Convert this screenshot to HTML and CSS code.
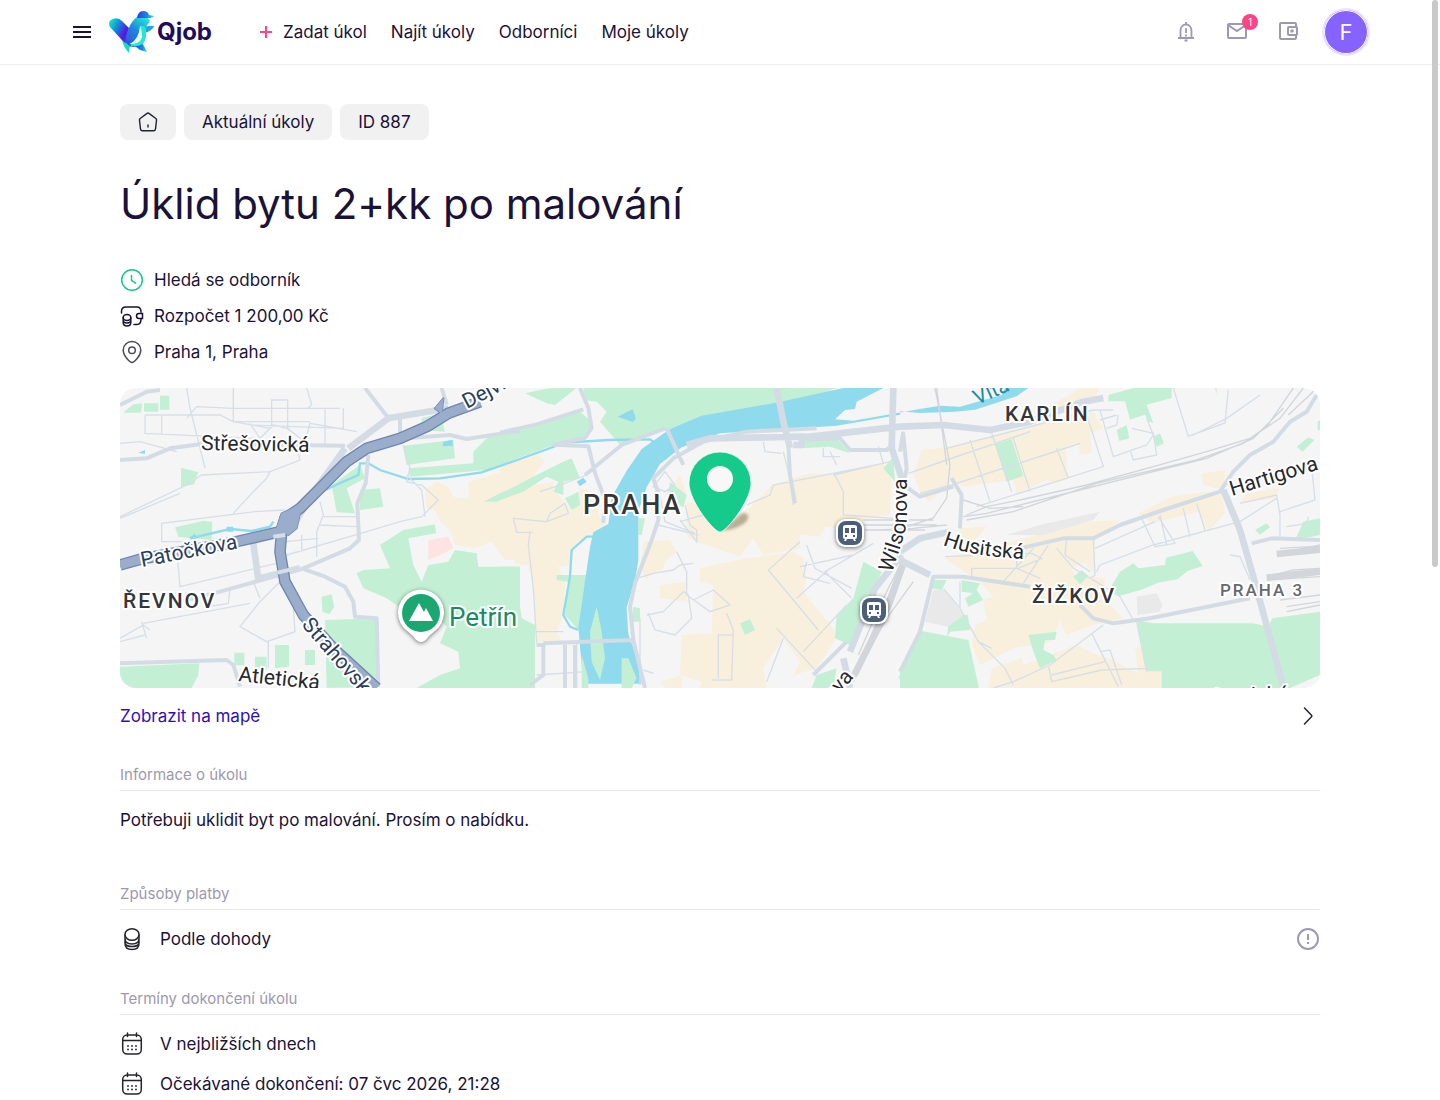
FILE: index.html
```html
<!DOCTYPE html>
<html lang="cs">
  <head>
    <meta charset="utf-8">
    <meta name="viewport" content="width=device-width, initial-scale=1">
    <title>Úklid bytu 2+kk po malování</title>
    <link rel="stylesheet" href="styles.css">
  </head>
  <body>
    <header class="header">
      <button class="menu" type="button" aria-label="Menu">
        <svg width="18" height="12" viewBox="0 0 18 12"><path d="M0 1h18M0 6h18M0 11h18" stroke="#1b1238" stroke-width="2"/></svg>
      </button>
      <a class="logo" href="#">
        <svg width="46" height="42" viewBox="0 0 46 42">
          <defs>
            <linearGradient id="wing" x1="0" y1="0.2" x2="1" y2="0.8"><stop offset="0" stop-color="#16e3c5"/><stop offset="0.35" stop-color="#1484dc"/><stop offset="0.7" stop-color="#5a14dc"/><stop offset="1" stop-color="#2a62dd"/></linearGradient>
            <linearGradient id="bird" x1="0.2" y1="1" x2="0.8" y2="0"><stop offset="0" stop-color="#3450e0"/><stop offset="0.5" stop-color="#1f86e0"/><stop offset="1" stop-color="#1eead0"/></linearGradient>
            <linearGradient id="cap" x1="0" y1="0" x2="1" y2="0"><stop offset="0" stop-color="#2b40d8"/><stop offset="0.6" stop-color="#1d86e0"/><stop offset="1" stop-color="#2af0d8"/></linearGradient>
          </defs>
          <path d="M13 28 Q14 36 20 42 L20 37 L24 34z" fill="#19dcc4"/>
          <path d="M26 35 L33 32 Q36 36 38 41 L31 39z" fill="url(#cap)"/>
          <path d="M34 18 Q37 14 45 15 Q44 19 36 22z" fill="#1da6e2"/>
          <path d="M1 16 Q-2 10 4 8 Q9 6 13 10 L22 19 L20 33 Q15 32 12 28z" fill="url(#wing)"/>
          <path d="M19 19 Q23 9 28 6 L38 7 Q43 9 39 13 Q36 16 37 23 Q36 36 24 36 Q13 34 19 19z" fill="url(#bird)"/>
          <path d="M31 15 Q38 13 37 24 Q36 37 22 35 L21 32 Q32 32 31 15z" fill="#27e6d4"/>
          <path d="M31 15 Q38 33 21 33 Q30 28 31 15z" fill="#e2fff9"/>
          <path d="M28 7 Q29 0 34 0 Q39 0 40 4 L45 5 Q44 7 39 7z" fill="url(#cap)"/>
        </svg>
        <span>Qjob</span>
      </a>
      <nav class="nav">
        <a class="nav-new" href="#">
          <svg width="12" height="12" viewBox="0 0 12 12"><path d="M6 0v12M0 6h12" stroke="#fb4585" stroke-width="2"/></svg>
          Zadat úkol
        </a>
        <a href="#">Najít úkoly</a>
        <a href="#">Odborníci</a>
        <a href="#">Moje úkoly</a>
      </nav>
      <div class="tools">
        <button type="button" aria-label="Oznámení">
          <svg width="24" height="24" viewBox="0 0 24 24" fill="none" stroke="#9d99b0" stroke-width="1.8"><path d="M4 18h16M6.500 18v-7.500a5.500 6 0 0 1 11 0V18M12 4.500V2M10.500 20.500h3M12 8v5M12 14.500v2"/></svg>
        </button>
        <button type="button" aria-label="Zprávy">
          <svg width="24" height="24" viewBox="0 0 24 24" fill="none" stroke="#9d99b0" stroke-width="2"><rect x="3" y="4" width="18" height="14" rx="1"/><path d="M3 5l9 6 9-6"/></svg>
          <span class="badge">1</span>
        </button>
        <button type="button" aria-label="Peněženka">
          <svg width="24" height="24" viewBox="0 0 24 24" fill="none" stroke="#9d99b0" stroke-width="2"><path d="M20 7V4a1 1 0 0 0-1-1H5a1 1 0 0 0-1 1v14a1 1 0 0 0 1 1h14a1 1 0 0 0 1-1v-3"/><rect x="12" y="7" width="9" height="8" rx="1"/><circle cx="16" cy="11" r="0.800"/></svg>
        </button>
        <button class="avatar" type="button" aria-label="Profil">F</button>
      </div>
    </header>

    <main class="page">
      <nav class="crumbs">
        <a href="#" aria-label="Domů">
          <svg width="20" height="20" viewBox="0 0 20 20" fill="none" stroke="#1f2430" stroke-width="1.400" stroke-linecap="round" stroke-linejoin="round"><path d="M8.700 1.600a2 2 0 0 1 2.600 0l6.500 4.900a1.800 1.800 0 0 1 .7 1.800l-1 8.500a2 2 0 0 1-2 1.900H4.500a2 2 0 0 1-2-1.900L1.500 8.300a1.800 1.800 0 0 1 .7-1.800zM10 13v2"/></svg>
        </a>
        <a href="#">Aktuální úkoly</a>
        <a href="#">ID 887</a>
      </nav>

      <h1>Úklid bytu 2+kk po malování</h1>

      <ul class="meta">
        <li>
          <svg width="24" height="24" viewBox="0 0 24 24" fill="none" stroke="#15ca8a" stroke-width="1.500" stroke-linecap="round" stroke-linejoin="round"><circle cx="12" cy="12" r="10.300"/><path d="M11.500 7.500v4.800l4 2.800"/></svg>
          Hledá se odborník
        </li>
        <li>
          <svg width="24" height="24" viewBox="0 0 24 24" fill="none" stroke="#1b1238" stroke-width="1.500" stroke-linecap="round"><path d="M1.500 9V7.500Q1.500 3 6 3h11q4 0 4 5M21 15q0 5.500-4 5.500h-3M22.500 9.500v5h-3.500a2.500 2.500 0 0 1 0-5z"/><ellipse cx="7" cy="13.500" rx="3.800" ry="3"/><path d="M3.200 13.500v5q0 3.500 3.800 3.500t3.800-3.500v-5M3.200 16q0 3 3.800 3t3.800-3"/></svg>
          Rozpočet 1 200,00 Kč
        </li>
        <li>
          <svg width="24" height="24" viewBox="0 0 24 24" fill="none" stroke="#4c4c55" stroke-width="1.500"><path d="M12 22.500c-1.500 0-8.800-6-8.800-12.500a8.800 8.500 0 0 1 17.600 0c0 6.500-7.300 12.500-8.800 12.500z"/><circle cx="12" cy="10.300" r="3.300"/></svg>
          Praha 1, Praha
        </li>
      </ul>

      <svg class="map" viewBox="0 0 1200 300" preserveAspectRatio="xMidYMid slice" role="img" aria-label="Mapa">
        <rect width="1200" height="300" fill="#f5f5f5"/>
        <!-- terrain and streets -->
        <svg width="1200" height="300" viewBox="0 9 3600 900">
          <g class="urban">
            <path d="M915 315l35-25 35 15 15 30 45 5v-50l150-45h50v280h-90l-40-55-50 20-60-10-15-45-30-25-15-35-25-5z"/>
            <g transform="translate(1140)">
              <path d="M0 245l110-35 25 15-25 35-60 40-50 20zM0 360l100-60 60-10v20l55 70 25-70 40 10 20 80 20 30-90 40-20 70-35 5 20 45-5 100-20 50 15 30h-75l-10-170-15-60-40-5-5-55-40-30zM83 800h20v70H85z"/>
              <path d="M560 350l165 40 90-90 115-35 70 5 150-35 25 45-5 110-60 10-100 30-35-5-15 30-60-5v40l-110 20-30-50-40 55-130-45-30-15zM600 550l140-30 140-20 30 20 10 60-10 40 90 110 10 30-60 90-70 20 20-40-50-70-60 90 10 59H600l5-19-65-20 5-120 90-5 5-145-40-10z"/>
              <path d="M430 470l80-5 20 35-35 30-5 20-50 30-20-30zM480 600l80-10v60l-80-10zM500 330l40-60 20 60-10 40zM485 890l60-20v39h-50z"/>
            </g>
            <g transform="translate(2340)">
              <path d="M140 185l440-105 30 50-40 15 5 60-35 5-5-35-40 10 10 95-35 15-30-10-90 40-10-40-150 20-30-20-70 65-25-20-25-60 25-75zM420 80l120-70h60l-20 40-80 30zM60 215l60-15v35l-60 5zM905 265l70-10-5 60-60-15zM715 385l100-50 100-15 50 10 10 55-50 55-30-60-140 35zM1020 355l20-30 100-15-15 30zM130 520l320-80 120-30 90-5-75 60-5 100-25-30-40 15 10 20 90 10-5 60 60 60-90 20-80 30-20-40-30 60-110 20-100 50-25-60 10-60 35-15-10-60 30-10-40-45zM180 430l80-5-30 35-50 20zM275 850l90-30 5 20 160-60 50 25 60 20 55 30 20 10-10-75 40-10 15 75 35 5v49H265z"/>
            </g>
          </g>
          <g class="park">
            <path d="M10 83l30-25 27-3-4 28zM72 55h43v25H72zM120 32h28v42h-28zM183 248l52 14-13 36-39 8zM165 427l85-19 27 2-2 55-100-10zM848 183l152-18 5 55-145 20zM1060 200l50-50 90-10v75l-100 40-230 20-5-25 195-15zM905 100l55-15 50 10-45 10 10 35-70-5zM635 300l85-60 15 40-55 30 25 75-55-3zM720 315l60-5 10 55-70 10zM780 480l70-45 95-17 3 27-83 15 15 80 25 50 20-50 60-10 20-35 65 10 5 40h125v364H890l70-39 60-20-5-50-55-25 20-50-30-30-100-20-50-35-70-30-20-45 20-10 80-5zM605 635l30-7 8 37-15 23-21-8zM615 705l155-5 7 205-157 4zM343 803h30v38h-30zM465 780h42v65l-42 5zM405 815h35v40h-35zM555 795h30v45h-30zM0 845l238-10-3 35-20 39H0zM1090 350l60-30 50-20v20l-70 30z"/>
            <g transform="translate(1140)">
              <path d="M250 9h760l-70 26-180 35-160 30-100 35-140 45-60-70 20-30-30-30-35-5zM75 25l75-16h80l-65 51-25-5zM0 150l240-70 35 30-10 40-105 30-160 60zM0 545h60l-10 45 15 110 40 20v189H0zM120 265l60-30 35-15 25 60-50 10v40l-30-10 15-30-35-15-70 45-70 25 5-20zM170 570h90l-10 50-15 115-40-45 10-100-35-5zM195 340l40-20 5 40-25 15zM720 715l30-12 15 32-30 15zM900 165l110-5 40 45-60-20-90 5zM1090 530l55 30-95 220-45-20 5-70 50-50zM1235 790l25-30v149l-65-29zM1150 250l30-35 5 75zM950 870l60-20-10 59h-65zM510 290l50 40-10 35-50-15zM415 400h20l-10 50h-10zM400 665l20 5v40h-25z"/>
            </g>
            <g transform="translate(2340)">
              <path d="M285 178l50-15 35 110-50 17zM625 30l75-21h115v30l-75 20 20 55-15-5-10-20-45 15-15-55-50 0zM650 135l30-15 8 40-30 8zM760 155l20-10 12 30-22 10zM1190 185l35-28 18 8-35 35zM1065 435l35-20 10 12-30 22zM1210 410l50-10v50l-75 15zM1253 110l7-5v30h-7zM945 9h5v18zM630 610l30-50 40-25 15 15 80-10 3-22 80-20 30 45-45 15-30 25-60 10-45 20-70 20zM520 575l25-20 20 18-25 25zM95 585h45l-15 30-30-5zM185 585l55 10-10 20 20 30-45 20-10-25 25-15-35-5zM148 690h55l8 45-60 5-10 15zM65 738l140 27 32 144H0v-60zM385 750l85-10-5 25-30 0-5 30 30 15 10 15-50 25-20-50zM710 705l50 10 300 0 45 10 12-25 143-20v190l-90 39H785v-50h-45z"/>
            </g>
          </g>
          <path d="M925 465l60-10 15 35-40 20-35 15z" fill="#fde3e1"/>
          <path d="M2440 615l35 0 55 75-45 35-70-15zM3050 635l60-10 18 35-10 20-65 10zM2660 450l100-30 180-40-20 25-150 45z" fill="#e9e9e9"/>
          <g class="water">
            <path d="M2170 9h120l-80 41-5 22-30 3-30 28 55 4 200-35 60-10 60 3 125-35 10-21h70l-35 25-125 40-60 6-105 4-60-5 0 10-190 33-150 10-200 13-115 42-65 50-40 70-25 70v150l-10 60-25 80 5 80 25 70 15 79h-175l-15-169 20-140 15-100 10-45 45-25 10-80 45-80 45-65 85-60 95-40 230-40z"/>
            <path d="M1493 95l45-22 10 28-10 10zM1370 290l20-12 10 12-20 14zM970 170l28-6v18l-30 2zM55 203l20-8v12zM320 425h20v15h-20zM205 460l20-14 5 16z"/>
            <path class="stream" d="M210 460l120-28 65 6 55-13 10-15M610 318l60-28 45-20 5-35h25l35 20 85 27 95-2 125-18 115-40 135-49 130-8 125-2 40 27M1430 455l-30 0-45 40-5 80-20 115 20 35 25 10"/>
          </g>
          <path class="park-fill" d="M1430 665l15 75 10 80-15 65-25-55-5-90zM1505 820h20l25 60-15 29h-30zM1385 810l20 70v29h-20z"/>
          <g class="street">
            <path d="M75 90h225l40 20 110 20M75 90v55l330 15M125 90v60M0 175l60-5 110 30M200 9l10 60 45 180M200 100l30-35 110 5 320 0M340 9v100M390 115l30 45 40-40 40 10 55 40 15-55 140 25M455 130V45h48v85l50 40M560 9l15 50-10 10M615 70v110M670 70v60l-280-10M340 110h230M0 395l200-95 45-30 205-10 90-35-10-40M340 385l60-65 40-40 10-20M0 400l180-75M125 470V415l280-35 90-5M125 470h80M170 490l10 115 290-70M330 610l-5 45-60 10M500 510l240-70 100-30 65-15 50-50-50-45-45-10 10-40-20-70M915 395l-10-80-45-45M600 350l10 40-20 50v75M545 450v50M595 460l-100 10M600 420l110 5M610 395l110 0M400 590l20 50M480 590l-60 60-60 75 80 45 85-30-5-70M445 770v80M0 760l70-40 20 15M0 770l75-20M65 710l15 50M70 715l320-60"/>
            <g transform="translate(1140)">
              <path d="M50 440l-10-40 100 10 10-25 45-30 10 30-65 25M90 440l-5 40 15 130 10 165M110 740h80M40 400l10 42h50M120 320l60-20 80-30M460 305l35-45 30 40-30 20zM480 330l15 80 90 35M475 420l120 30M555 360l15 60 20 15v35l-50-65M540 410l70-20M530 500l30 60v70l70 50 60-20-50-45-60 30M410 580l50-15 60-10 20-15 40-5M440 690l50-10 60-60 15 10 10 70-50 50-60-15-20-50M420 700v200M430 855l30 10M680 685l20 50-5 150-60 0M655 880V750h45M790 170l5 30 50 5M850 200l20 80 10 80M740 360l70-30 10-30 180-35 150-30-15-50M1005 270l25 50v70l150 10M900 470l-95 85 150 180M920 480l25 70 110 60M1120 475l-145 85 80 80M900 545l160-35M920 530l-10 45 80 20M890 640l100-90M910 800l130-140M850 760l-50 130M830 730l120 130M1000 270l170-40M990 200l20 40M970 190v25l50 0M110 870l150-10M195 770v139M230 770v139"/>
            </g>
            <g transform="translate(2340)">
              <path d="M140 190l440-115 60 0M25 265l115-40 250-85M60 325l110-30 310-100 60-20M210 165l60 185M275 145l60 175M340 160l50 160M470 190l35 90M560 90l50 155-380 120M600 75l40 140 100-35 20-30-20-50M600 105l50-15M620 130l30-10 5-30M690 195l10 30 70-15-10-65-65-15M820 9l45 145 110-40 10-100M880 150l100-50 100-70M725 400l40 85 60-10-50-80M780 390l20 90M850 370l20 85M890 355l25 80M585 490l180-80M590 560l10-20 160-60 260-70 110-70M1020 355l110-25 10 60v70M1140 380l105-35-10-100M1225 395l-5 20-60 10M500 460l-5 50 75 50M580 460l5 110-15 10M470 490l50 60 60 35 80 50 40 70M445 480l-75 115M400 490l-90 100M215 550h140l70-30-30-15-260 10M350 525v25l70 30M215 550v30M990 510l30 5 30 70M130 610l50 60 55 100 80 80 25 50M180 590v80M235 770l40 20M340 890l110-50 160-120M445 840l10 50 150-35 140-5M455 870l160-40M575 745l80 160M600 800l30-5 35 105M710 710l30 150M340 890l-60 19"/>
            </g>
          </g>
          <g class="rail">
            <path d="M2540 390l60-25 100-20 200-45 200-55 160-45 130-40 90-60 70-91M2530 395l70-10 280-70 220-55 160-40 140-60 90-90M2540 405l140-25 250-85 300-70 140-50 70-50 80-116M2445 9l45 230-10 100-40 60-90 30M2450 9l30 230M2530 345l80 25 100-5M2230 405h210M2230 420h220M2235 435h180M2340 540l-60 120-65 150M2350 520l-50 140-100 230M2380 590l-80 110-110 200M2360 530l-45 130-110 220M2480 420l-100 10-100 5M3480 490l90-5 30 0M3480 505l120-25M3440 575l80-20 80-5M3440 585l160-10M3480 645l120-15M3500 665l100-15M3500 680l100-20M3505 90l80-75"/>
          </g>
          <path class="rail-yard" d="M3470 507l130-13M3440 578l160-18M2348 540l-40 110-50 110-55 110"/>
          <g class="road">
            <path d="M0 60l80-40 40-5M0 225l80-5 70-30 95-13 430 5M180 650l120-30 250-70 140-60 27-25-5-110 25-60 8-85M735 9l70 90M840 90v60M965 9l15 50M545 550l70 25 60 30 25 45 5 45 65 5 5 205M860 160l130-10 50 12 160-25M0 835l320-10 20 15 20 65M1140 143l110-25 140-45M1380 9l25 60 10 60-20 30-95 20 105 5 20 80 30 80-5 70M1395 270l110-90 130-50M1250 780h20v90l-40 30M1270 775l270-10-10-100 15-70 50-130 20-60 0-80-15-45 60-60 90-50 130-30 210-10M1540 765l35 144M1640 130l50 110M1335 780v129M1365 780v129M2060 165l100-5 30 35 110 0 20-20"/>
            <path d="M2700 490l130-30 90 0 80-40 130-45 170-55 40-60 50-50 70-40 50-60 50-30 30-50M2520 430l5-100-30-50M2340 200l10-60M2350 150l10 100-10 50 50 35 100-30M2340 860l60-120 40-165 90 0 200 30M2880 660l40 40 60 15 110-15 300-60M3395 475l60-15 145 5M2080 870l100-100"/>
          </g>
          <g class="road-wide">
            <path d="M685 190l120-90 180-30M675 190l-100 140-60 100M400 475l15 110M420 580l120-30M1970 9l20 100 20 80M2320 9l-5 180 30 90-5 40M2020 180h25v-25h-30M1700 180l70-20 300-5 270-30 130-5 140 15 120-25 160-60 60-11M3310 315l50 120 40 140 90 330M2170 820l20 89M2340 500l60-40 90-20M2340 525l90 45M2345 510l-80 100-75 190"/>
          </g>
          <path class="road" d="M2005 180l5 90 15 85"/>
          <g class="motorway-case">
            <path d="M0 540l60-17 290-53 130-30M1080 50l-95 35-65 40-80 35-100 30-60 40-80 80-60 60-45 30-10 40-5 60 15 90 55 100 90 100 130 119"/>
            <path d="M470 430l15-45 60-25-15 70-25 20zM945 70l25-30-5 45z"/>
          </g>
          <g class="motorway">
            <path d="M0 540l60-17 290-53 130-30M1080 50l-95 35-65 40-80 35-100 30-60 40-80 80-60 60-45 30-10 40-5 60 15 90 55 100 90 100 130 119"/>
            <path d="M470 430l15-45 60-25-15 70-25 20zM945 70l25-30-5 45z"/>
          </g>
          <path d="M460 455l35-5M472 563l42-10" stroke="#d6dfe7" stroke-width="12"/>
        </svg>

        <!-- labels -->
        <defs>
          <path id="wilsonova" d="M772 185L782 154Q787 140 787 124V60"/>
          <path id="husitska" d="M823 157Q850 168 903 171"/>
          <filter id="soft"><feGaussianBlur stdDeviation="1.5"/></filter>
        </defs>
        <g class="label">
          <text transform="translate(81 62) rotate(1)">Střešovická</text>
          <text class="navy" transform="translate(22 179) rotate(-11)">Patočkova</text>
          <text class="navy" transform="translate(181 237) rotate(49)">Strahovská</text>
          <text class="navy" transform="translate(347 21) rotate(-28)">Dejvická</text>
          <text transform="translate(118 293) rotate(6)">Atletická</text>
          <text><textPath href="#wilsonova">Wilsonova</textPath></text>
          <text><textPath href="#husitska">Husitská</textPath></text>
          <text transform="translate(1112 108) rotate(-17)">Hartigova</text>
          <text transform="translate(734 289) rotate(-50)" text-anchor="end">Sokolova</text>
          <text transform="translate(1053 319) rotate(-3)">Vinohradská</text>
          <text class="river" transform="translate(857 17) rotate(-24)">Vltava</text>
          <text class="peak" x="329" y="238">Petřín</text>
          <text class="district" x="3" y="220">ŘEVNOV</text>
          <text class="district" x="885" y="33">KARLÍN</text>
          <text class="district" x="912" y="215">ŽIŽKOV</text>
          <text class="district small" x="1100" y="208">PRAHA 3</text>
          <text class="district city" x="463" y="126">PRAHA</text>
        </g>

        <!-- places -->
        <g class="place">
          <path d="M301 254q-4 0-8-6l-7-6a23 23 0 1 1 30 0l-7 6q-4 6-8 6z" fill="#fff"/>
          <circle cx="301" cy="225" r="19" fill="#1ca672"/>
          <path d="M289 233l10-18 5 9 2-4 7 13z" fill="#fff"/>
        </g>
        <defs>
          <g id="station">
            <rect x="-14" y="-14" width="28" height="28" rx="9" fill="#fff"/>
            <rect x="-12" y="-12" width="24" height="24" rx="8" fill="#4b6078"/>
            <path d="M-7-6q0-2 3-2h8q3 0 3 2V4q0 2-2 2l1 2H4L3 6h-6l-1 2h-2l1-2q-2 0-2-2z" fill="#fff"/>
            <path d="M-5-5h4v5h-4zM1-5h4v5H1zM-5 2h2v2h-2zM3 2h2v2H3z" fill="#4b6078"/>
          </g>
        </defs>
        <use class="place" href="#station" x="730" y="145"/>
        <use class="place" href="#station" x="754" y="222"/>
        <path d="M602 143l20-18q10 0 4 9-8 7-24 9z" fill="#7a6a50" opacity="0.5" filter="url(#soft)"/>
        <path d="M600 144c-6 0-31-31-31-49a31 31 0 0 1 62 0c0 18-25 49-31 49z" fill="#15ca8a" stroke="#fff" stroke-opacity="0.7"/>
        <circle cx="600" cy="91" r="13" fill="#f8f8f8"/>
      </svg>

      <a class="map-link" href="#">
        Zobrazit na mapě
        <svg width="24" height="24" viewBox="0 0 24 24" fill="none" stroke="#25252c" stroke-width="1.500" stroke-linecap="round" stroke-linejoin="round"><path d="M8.500 4l7 7.200q.8.800 0 1.600L8.500 20"/></svg>
      </a>

      <section class="info">
        <h2>Informace o úkolu</h2>
        <p>Potřebuji uklidit byt po malování. Prosím o nabídku.</p>
      </section>

      <section class="payment">
        <h2>Způsoby platby</h2>
        <div class="row">
          <svg width="24" height="24" viewBox="0 0 24 24" fill="none" stroke="#25252c" stroke-width="1.500"><ellipse cx="12" cy="7.500" rx="7" ry="5.800"/><path d="M5 7.500v9q0 6 7 6t7-6v-9M5 11.500q0 5.500 7 5.500t7-5.500M5.300 17q1.500 2.500 6.700 2.500t6.700-2.500"/></svg>
          <span>Podle dohody</span>
          <button type="button" aria-label="Více informací">
            <svg width="24" height="24" viewBox="0 0 24 24" fill="none" stroke="#9d99b0" stroke-width="2"><circle cx="12" cy="12" r="10"/><path d="M12 7v6M12 15v2"/></svg>
          </button>
        </div>
      </section>

      <section class="dates">
        <h2>Termíny dokončení úkolu</h2>
        <div class="row">
          <svg width="24" height="24" viewBox="0 0 24 24" fill="none" stroke="#25252c" stroke-width="1.500" stroke-linecap="round"><rect x="2.700" y="3" width="18.600" height="19" rx="4.500"/><path d="M3 8.500h18M7.500 1v3.500M16.500 1v3.500"/><path d="M8 14h.01M12 14h.01M16 14h.01M8 17.500h.01M12 17.500h.01M16 17.500h.01" stroke-width="1.800"/></svg>
          <span>V nejbližších dnech</span>
        </div>
        <div class="row">
          <svg width="24" height="24" viewBox="0 0 24 24" fill="none" stroke="#25252c" stroke-width="1.500" stroke-linecap="round"><rect x="2.700" y="3" width="18.600" height="19" rx="4.500"/><path d="M3 8.500h18M7.500 1v3.500M16.500 1v3.500"/><path d="M8 14h.01M12 14h.01M16 14h.01M8 17.500h.01M12 17.500h.01M16 17.500h.01" stroke-width="1.800"/></svg>
          <span>Očekávané dokončení: 07 čvc 2026, 21:28</span>
        </div>
      </section>
    </main>
    <div class="scroll-thumb"></div>
  </body>
</html>
```
FILE: styles.css
```css
* { box-sizing: border-box; }
body { margin: 0; background: #fff; color: #1b1238; font: 17px/24px Inter, "Noto Sans", sans-serif; }
a { color: inherit; text-decoration: none; }
button { padding: 0; border: 0; background: none; font: inherit; cursor: pointer; }
svg { display: block; flex: none; }

.header { display: flex; align-items: center; height: 65px; padding: 0 70px 0 73px; border-bottom: 1px solid #efeff2; }
.logo { display: flex; align-items: center; gap: 2px; margin-left: 18px; color: #210b5c; font-size: 24px; font-weight: 700; }
.nav { display: flex; gap: 24px; margin-left: 48px; }
.nav-new { display: flex; align-items: center; gap: 11px; }
.tools { display: flex; align-items: center; gap: 27px; margin-left: auto; }
.tools button { position: relative; }
.badge { position: absolute; top: -6px; right: -9px; width: 16px; height: 16px; border-radius: 8px; background: #fb4585; color: #fff; font-size: 10px; line-height: 16px; text-align: center; }
.tools .avatar { width: 48px; height: 48px; margin-left: -5px; border: 2px solid #ebe5ff; border-radius: 50%; background: #8662ff; color: #fff; font-size: 22px; box-shadow: inset 0 0 0 1px #fff; }

.page { max-width: 1200px; margin: 0 auto; padding-top: 39px; }
.crumbs { display: flex; gap: 8px; }
.crumbs a { display: flex; align-items: center; height: 36px; padding: 0 18px; border-radius: 8px; background: #f1f1f1; }
h1 { margin: 40px 0; font-size: 42px; line-height: 48px; font-weight: 400; }

.meta { display: grid; gap: 12px; margin: 0 0 24px; padding: 0; list-style: none; }
.meta li { display: flex; gap: 10px; }

.map { width: 100%; height: 300px; border-radius: 16px; }
.urban { fill: #f8f0dd; }
.park, .park-fill { fill: #c3f0d4; }
.water { fill: #90daee; }
.stream { fill: none; stroke: #90daee; stroke-width: 7; }
.street { fill: none; stroke: #d6dfe7; stroke-width: 4; }
.rail { fill: none; stroke: #d2d5da; stroke-width: 4; }
.rail-yard { fill: none; stroke: #d2d5da; stroke-width: 20; }
.road, .road-wide { fill: none; stroke: #d3dce5; stroke-width: 12; stroke-linejoin: round; }
.road-wide { stroke-width: 20; }
.motorway { fill: #9aaecb; stroke: #9aaecb; stroke-width: 27; stroke-linejoin: round; }
.motorway-case { fill: none; stroke: #6f87b0; stroke-width: 35; stroke-linejoin: round; }
.motorway path:first-child { fill: none; }
.motorway path:last-child { stroke-width: 2; }
.motorway-case path:last-child { stroke-width: 6; }
.label { fill: #26282c; stroke: #fff; stroke-width: 4px; stroke-linejoin: round; paint-order: stroke; font: 21px Roboto, sans-serif; }
.navy { fill: #2b3d5c; }
.river { fill: #1a8ba3; stroke: none; }
.peak { fill: #1a8a62; font-size: 26px; }
.district { fill: #34363a; font-weight: 500; letter-spacing: 2px; }
.small { fill: #66686c; font-size: 17px; }
.city { font-size: 27px; }
.place { filter: drop-shadow(0 1px 2px #0008); }

.map-link { display: flex; align-items: center; justify-content: space-between; height: 56px; color: #2f0fb5; }

h2 { margin: 0 0 17px; padding-bottom: 5px; border-bottom: 1px solid #e9e7f3; color: #9d99ab; font-size: 15px; line-height: 20px; font-weight: 400; }
p { margin: 0; }
.info { margin: 21px 0 52px; }
.payment { margin-bottom: 38px; }
.row { display: flex; gap: 16px; margin-bottom: 16px; }
.row button { margin-left: auto; }

.scroll-thumb { position: fixed; top: 0; right: 2px; width: 6px; height: 567px; border-radius: 3px; background: #c9c9c9; }
```
